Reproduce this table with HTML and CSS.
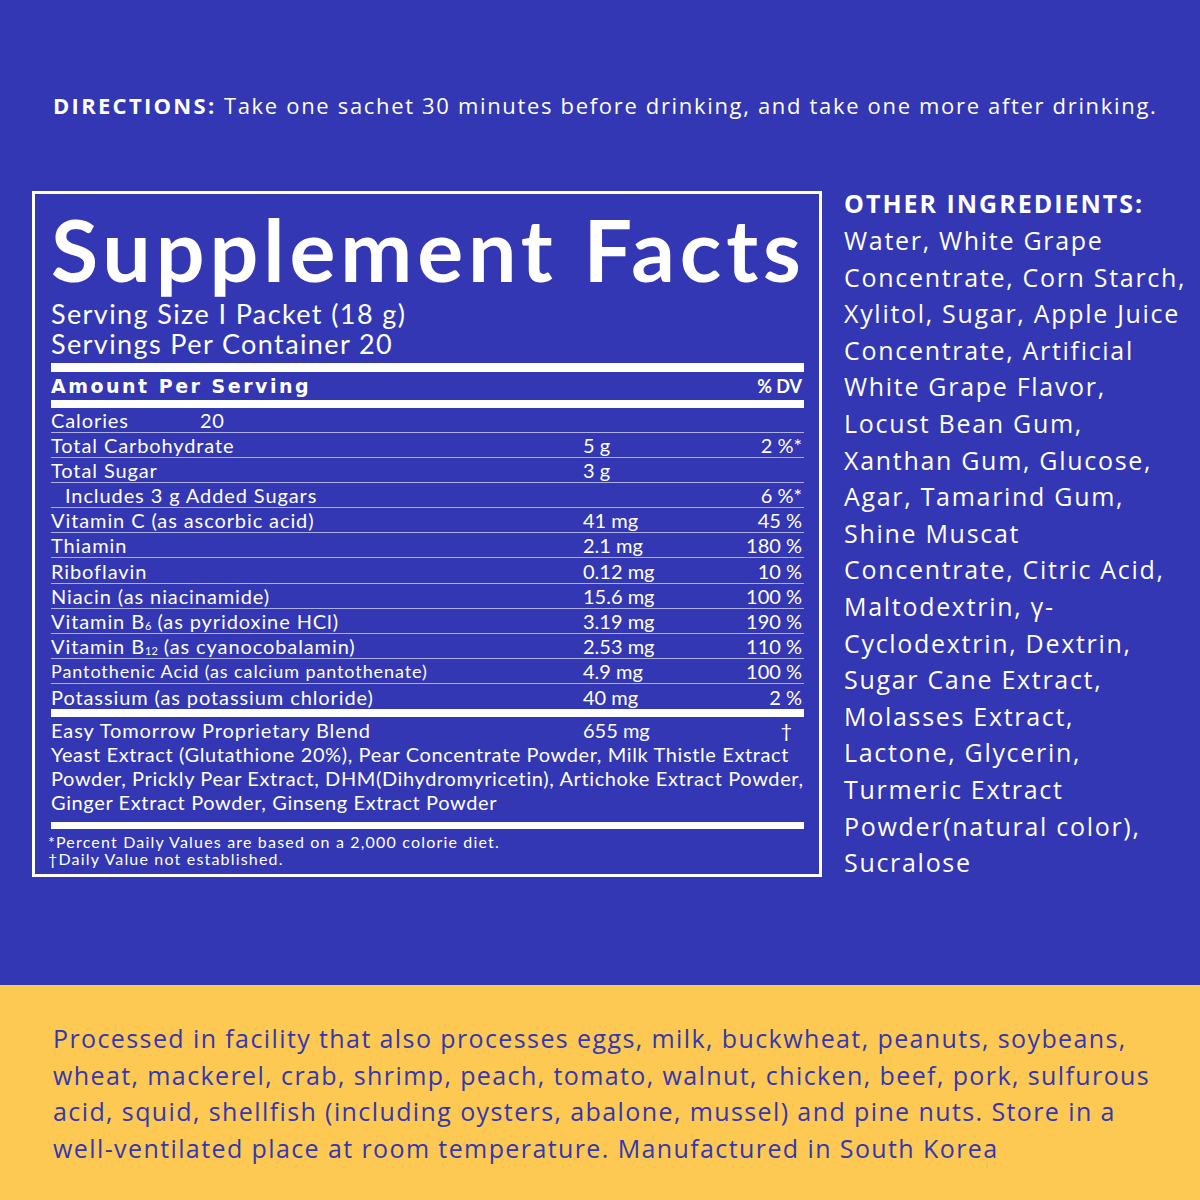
FILE: index.html
```html
<!DOCTYPE html>
<html>
<head>
<meta charset="utf-8">
<link rel="stylesheet" href="styles.css">
</head>
<body>
<div class="page">
  <section class="top">
    <p class="directions"><b>DIRECTIONS:</b> Take one sachet 30 minutes before drinking, and take one more after drinking.</p>
    <div class="main">
      <div class="panel">
        <h1 class="title">Supplement Facts</h1>
        <div class="serving">Serving Size I Packet (18 g)<br>Servings Per Container 20</div>
        <div class="bar bar-thick"></div>
        <div class="head-row"><span class="amount-head">Amount Per Serving</span><span class="dv">% DV</span></div>
        <div class="bar bar-mid"></div>
        <div class="rows">
          <div class="row"><span class="lbl">Calories<span class="cal">20</span></span><span class="amt"></span><span class="pct"></span></div>
          <div class="row"><span class="lbl">Total Carbohydrate</span><span class="amt">5 g</span><span class="pct">2 %*</span></div>
          <div class="row"><span class="lbl">Total Sugar</span><span class="amt">3 g</span><span class="pct"></span></div>
          <div class="row"><span class="lbl indent">Includes 3 g Added Sugars</span><span class="amt"></span><span class="pct">6 %*</span></div>
          <div class="row"><span class="lbl">Vitamin C (as ascorbic acid)</span><span class="amt">41 mg</span><span class="pct">45 %</span></div>
          <div class="row"><span class="lbl">Thiamin</span><span class="amt">2.1 mg</span><span class="pct">180 %</span></div>
          <div class="row"><span class="lbl">Riboflavin</span><span class="amt">0.12 mg</span><span class="pct">10 %</span></div>
          <div class="row"><span class="lbl">Niacin (as niacinamide)</span><span class="amt">15.6 mg</span><span class="pct">100 %</span></div>
          <div class="row"><span class="lbl">Vitamin B<sub>6</sub> (as pyridoxine HCl)</span><span class="amt">3.19 mg</span><span class="pct">190 %</span></div>
          <div class="row"><span class="lbl">Vitamin B<sub>12</sub> (as cyanocobalamin)</span><span class="amt">2.53 mg</span><span class="pct">110 %</span></div>
          <div class="row"><span class="lbl small">Pantothenic Acid (as calcium pantothenate)</span><span class="amt">4.9 mg</span><span class="pct">100 %</span></div>
          <div class="row"><span class="lbl">Potassium (as potassium chloride)</span><span class="amt">40 mg</span><span class="pct">2 %</span></div>
        </div>
        <div class="bar bar-mid"></div>
        <div class="blend">
          <div class="blend-row"><span class="lbl">Easy Tomorrow Proprietary Blend</span><span class="amt">655 mg</span><span class="pct dagger">†</span></div>
          <p class="blend-text">Yeast Extract (Glutathione 20%), Pear Concentrate Powder, Milk Thistle Extract<br>Powder, Prickly Pear Extract, DHM(Dihydromyricetin), Artichoke Extract Powder,<br>Ginger Extract Powder, Ginseng Extract Powder</p>
        </div>
        <div class="bar bar-mid"></div>
        <p class="foot">*Percent Daily Values are based on a 2,000 colorie diet.<br>†Daily Value not established.</p>
      </div>
      <aside class="other">
        <h2 class="other-title">OTHER INGREDIENTS:</h2>
        <p class="other-text">Water, White Grape<br>Concentrate, Corn Starch,<br>Xylitol, Sugar, Apple Juice<br>Concentrate, Artificial<br>White Grape Flavor,<br>Locust Bean Gum,<br>Xanthan Gum, Glucose,<br>Agar, Tamarind Gum,<br>Shine Muscat<br>Concentrate, Citric Acid,<br>Maltodextrin, γ-<br>Cyclodextrin, Dextrin,<br>Sugar Cane Extract,<br>Molasses Extract,<br>Lactone, Glycerin,<br>Turmeric Extract<br>Powder(natural color),<br>Sucralose</p>
      </aside>
    </div>
  </section>
  <section class="bottom">
    <p class="notice">Processed in facility that also processes eggs, milk, buckwheat, peanuts, soybeans,<br>wheat, mackerel, crab, shrimp, peach, tomato, walnut, chicken, beef, pork, sulfurous<br>acid, squid, shellfish (including oysters, abalone, mussel) and pine nuts. Store in a<br>well-ventilated place at room temperature. Manufactured in South Korea</p>
  </section>
</div>
</body>
</html>
```

FILE: styles.css
```css
* { box-sizing: border-box; }
html, body { margin: 0; padding: 0; }
body { background: #3337b3; }
.page { width: 1200px; height: 1200px; display: flex; flex-direction: column; font-family: "Open Sans", sans-serif; }
.top { height: 985px; background: #3337b3; color: #fff; padding-top: 90px; }
.directions { margin: 0 0 0 53px; font-size: 22px; line-height: 30px; font-weight: 400; letter-spacing: 1.67px; white-space: nowrap; }
.directions b { font-weight: 700; letter-spacing: 2.3px; }
.main { display: flex; margin-top: 71px; align-items: flex-start; }
.panel { margin-left: 32px; width: 790px; height: 686px; border: 3px solid #fff; padding: 0 15px 0 16px; font-family: "Lato", sans-serif; }
.title { margin: 10px 0 0 0; font-size: 86px; line-height: 90px; font-weight: 700; letter-spacing: 4.9px; white-space: nowrap; }
.serving { font-size: 27px; line-height: 30px; padding-top: 5px; letter-spacing: 1.4px; }
.bar { background: #fff; }
.bar-thick { height: 9px; margin-top: 4px; }
.bar-mid { height: 7.5px; }
.head-row { display: flex; justify-content: space-between; align-items: center; height: 28px; }
.amount-head { font-family: "DejaVu Sans", sans-serif; font-weight: 700; font-size: 19px; letter-spacing: 2.5px; white-space: nowrap; }
.head-row .dv { font-size: 18px; font-weight: 700; padding-right: 2px; }
.rows { display: flex; flex-direction: column; }
.row { display: grid; grid-template-columns: 532px 1fr 90px; height: 25.17px; border-bottom: 1px solid #aeb1df; align-items: center; font-size: 20px; }
.row:last-child { border-bottom: none; }
.lbl { white-space: nowrap; letter-spacing: 0.9px; }
.lbl.indent { padding-left: 14px; }
.lbl.small { font-size: 18px; }
.cal { margin-left: 71px; }
.pct { text-align: right; padding-right: 2px; }
sub { font-size: 11px; vertical-align: baseline; position: relative; top: 1px; letter-spacing: 0; }
.blend { padding: 1px 0 8px; font-size: 20px; }
.blend-row { display: grid; grid-template-columns: 532px 1fr 90px; height: 24px; align-items: center; }
.dagger { padding-right: 12px; }
.blend-text { margin: 0; line-height: 24px; letter-spacing: 0.62px; white-space: nowrap; }
.foot { margin: 4px 0 0 -3px; font-size: 16px; line-height: 17px; letter-spacing: 1.18px; }
.other { margin-left: 22px; }
.other-title { margin: -3px 0 0 0; font-size: 25px; line-height: 30px; font-weight: 700; letter-spacing: 2px; font-family: "Open Sans", sans-serif; white-space: nowrap; }
.other-text { margin: 4px 0 0 0; font-size: 25px; line-height: 36.6px; letter-spacing: 1.7px; white-space: nowrap; }
.bottom { flex: 1; background: #fec952; color: #3337b3; padding-top: 35px; }
.notice { margin: 0 0 0 53px; font-size: 25px; line-height: 36.5px; letter-spacing: 1.4px; white-space: nowrap; }
```
